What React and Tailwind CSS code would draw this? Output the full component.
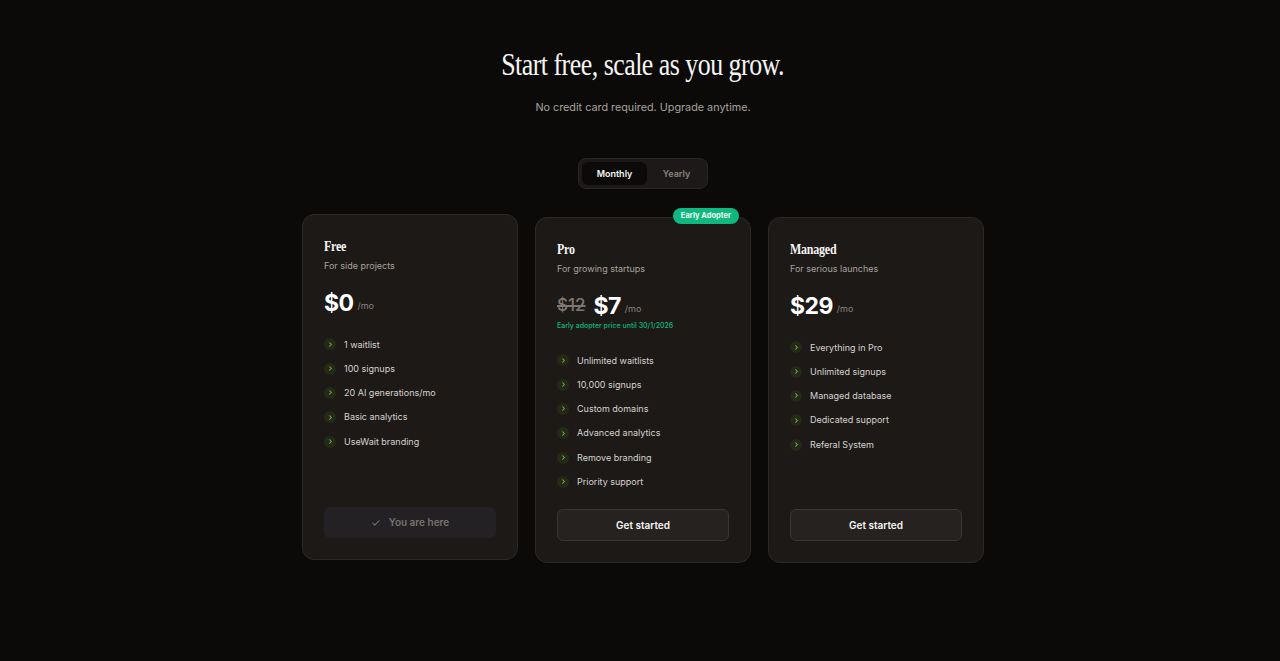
import React, { useState } from "react";

const serif = "[font-family:'Liberation_Serif',serif]";
const sans = "[font-family:Inter,'Noto_Sans',sans-serif]";

const plans = [
  {
    name: "Free",
    tagline: "For side projects",
    price: "$0",
    features: ["1 waitlist", "100 signups", "20 AI generations/mo", "Basic analytics", "UseWait branding"],
    current: true,
  },
  {
    name: "Pro",
    tagline: "For growing startups",
    price: "$7",
    oldPrice: "$12",
    note: "Early adopter price until 30/1/2026",
    badge: "Early Adopter",
    features: [
      "Unlimited waitlists",
      "10,000 signups",
      "Custom domains",
      "Advanced analytics",
      "Remove branding",
      "Priority support",
    ],
  },
  {
    name: "Managed",
    tagline: "For serious launches",
    price: "$29",
    features: ["Everything in Pro", "Unlimited signups", "Managed database", "Dedicated support", "Referal System"],
  },
];

function Chevron() {
  return (
    <span className="flex h-[12px] w-[12px] shrink-0 items-center justify-center rounded-full bg-[#232a17]">
      <svg width="7" height="7" viewBox="0 0 24 24" fill="none" stroke="#8cb043" strokeWidth="3.5" strokeLinecap="round" strokeLinejoin="round">
        <path d="m9 18 6-6-6-6" />
      </svg>
    </span>
  );
}

function PlanCard({ plan }) {
  return (
    <div
      className={`relative flex h-[346px] w-[216px] flex-col rounded-[12px] border border-[#2c2826] bg-[#1c1917] px-[21px] pt-[22px] pb-[21px] ${
        plan.current ? "-translate-y-[3px]" : ""
      }`}
    >
      {plan.badge && (
        <span className="absolute -top-[10px] right-[11px] rounded-full bg-[#10b77f] px-[8px] py-[3px] text-[7.5px] leading-[10px] font-bold text-[#ecfdf5]">
          {plan.badge}
        </span>
      )}
      <h3
        className={`${serif} origin-left scale-x-[0.8] text-[15px] leading-[18px] font-bold tracking-[-0.02em] text-[#f5f5f4]`}
      >
        {plan.name}
      </h3>
      <p className="mt-[3px] text-[9px] leading-[16px] text-[#a8a29e]">{plan.tagline}</p>
      <div className="mt-[14px] flex h-[30px] items-center">
        {plan.oldPrice && (
          <span className="mr-[8px] text-[17px] font-medium text-[#7d7773] line-through decoration-[1.5px]">
            {plan.oldPrice}
          </span>
        )}
        <span className="text-[23px] font-bold tracking-tight text-white">{plan.price}</span>
        <span className="mt-[6px] ml-[4px] text-[9px] text-[#8a847f]">/mo</span>
      </div>
      {plan.note && <p className="text-[7px] leading-[10px] font-medium text-[#10b77f]">{plan.note}</p>}
      <ul className={plan.note ? "mt-[17px]" : "mt-[14px]"}>
        {plan.features.map((f) => (
          <li key={f} className="flex h-[24.3px] items-center gap-[8px] text-[9px] text-[#d6d3d1]">
            <Chevron />
            {f}
          </li>
        ))}
      </ul>
      <div className="mt-auto">
        {plan.current ? (
          <div className="flex h-[31px] items-center justify-center gap-[8px] rounded-[6px] bg-[#232123] text-[10px] font-semibold text-[#78716c]">
            <svg width="10" height="10" viewBox="0 0 24 24" fill="none" stroke="#78716c" strokeWidth="2.5" strokeLinecap="round" strokeLinejoin="round">
              <path d="M20 6 9 17l-5-5" />
            </svg>
            You are here
          </div>
        ) : (
          <button className="flex h-[32px] w-full items-center justify-center rounded-[6px] border border-[#3a3533] bg-[#252220] text-[10px] font-semibold text-[#f5f5f4]">
            Get started
          </button>
        )}
      </div>
    </div>
  );
}

export default function App() {
  const [period, setPeriod] = useState("monthly");

  return (
    <main className={`${sans} min-h-screen bg-[#0c0a09] pt-[46px] pl-[6px] text-white`}>
      <div className="flex justify-center">
        <h1
          className={`${serif} scale-x-[0.81] text-center text-[32px] leading-[36px] tracking-[-0.02em] whitespace-nowrap text-[#f5f5f4]`}
        >
          Start free, scale as you grow.
        </h1>
      </div>
      <p className="mt-[18px] text-center text-[10.8px] text-[#a8a29e]">No credit card required. Upgrade anytime.</p>

      <div className="mt-[42px] flex justify-center">
        <div className="flex h-[31px] w-[130px] items-center gap-[2px] rounded-[8px] border border-[#2a2625] bg-[#1c1918] p-[3px]">
          <button
            onClick={() => setPeriod("monthly")}
            className={`h-[23px] w-[65px] rounded-[6px] text-[9px] font-semibold ${
              period === "monthly" ? "bg-[#0c0a09] text-[#f5f5f4]" : "text-[#8a847f]"
            }`}
          >
            Monthly
          </button>
          <button
            onClick={() => setPeriod("yearly")}
            className={`h-[23px] flex-1 rounded-[6px] text-[9px] font-semibold ${
              period === "yearly" ? "bg-[#0c0a09] text-[#f5f5f4]" : "text-[#8a847f]"
            }`}
          >
            Yearly
          </button>
        </div>
      </div>

      <div className="mt-[28px] flex justify-center gap-[17px]">
        {plans.map((p) => (
          <PlanCard key={p.name} plan={p} />
        ))}
      </div>
    </main>
  );
}
